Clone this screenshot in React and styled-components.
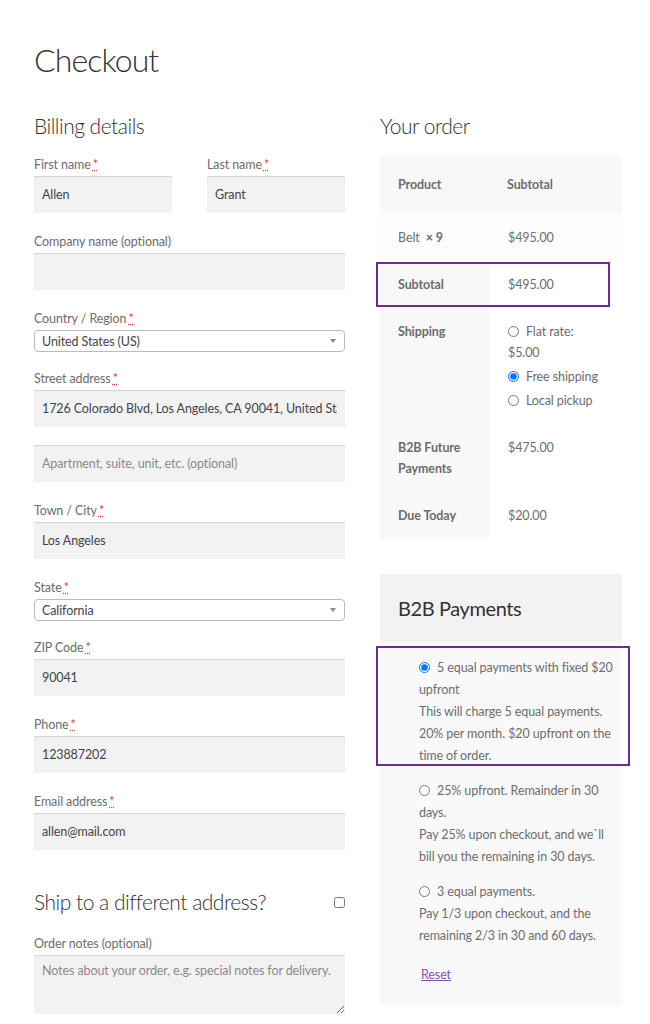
import React from "react";
import styled, { createGlobalStyle } from "styled-components";

const GlobalStyle = createGlobalStyle`
  body {
    margin: 0;
    background: #fff;
    color: #6d6d6d;
    font-family: Lato, "Liberation Sans", sans-serif;
    font-size: 12.5px;
    letter-spacing: -0.1px;
  }
  * {
    box-sizing: border-box;
  }
`;

const Page = styled.div`
  width: 650px;
  padding: 40px 28px 0 34px;
`;

const Title = styled.h1`
  margin: 0;
  font-size: 32px;
  line-height: 40px;
  font-weight: 300;
  letter-spacing: -0.9px;
  color: #333;
`;

const Columns = styled.div`
  display: grid;
  grid-template-columns: 311px 242px;
  column-gap: 35px;
  margin-top: 32px;
`;

const Heading = styled.h3`
  margin: 0 0 ${(p) => p.$gap || 14}px;
  font-size: 21px;
  line-height: 28px;
  font-weight: 300;
  letter-spacing: -0.5px;
  color: #333;
`;

const NameRow = styled.div`
  display: grid;
  grid-template-columns: 138px 138px;
  column-gap: 35px;
`;

const Field = styled.div`
  margin-bottom: ${(p) => (p.$compact ? 16 : 18)}px;
`;

const Label = styled.label`
  display: block;
  line-height: 21px;
  margin-bottom: 1px;
  color: #6d6d6d;
`;

const Required = styled.abbr`
  color: #e2401c;
  text-decoration: underline dotted;
  margin-left: 2px;
`;

const Input = styled.input`
  display: block;
  width: 100%;
  height: 37px;
  padding: 0 8px;
  border: 0;
  background: #f2f2f2;
  box-shadow: inset 0 1px 1px rgba(0, 0, 0, 0.125);
  font-family: inherit;
  font-size: 12.5px;
  letter-spacing: -0.1px;
  color: #43454b;
  outline: none;
  &::placeholder {
    color: #8a8a8a;
  }
`;

const Select = styled.div`
  display: flex;
  align-items: center;
  justify-content: space-between;
  height: 22px;
  padding: 0 8px 0 7px;
  border: 1px solid #bbb;
  border-radius: 4px;
  background: #fff;
  color: #43454b;
`;

const Caret = styled.span`
  width: 0;
  height: 0;
  border-left: 3.5px solid transparent;
  border-right: 3.5px solid transparent;
  border-top: 4px solid #888;
`;

const ShipRow = styled.div`
  display: flex;
  align-items: center;
  justify-content: space-between;
  margin: 38px 0 17px;
`;

const ShipTitle = styled.h3`
  margin: 0;
  font-size: 21px;
  line-height: 28px;
  font-weight: 300;
  letter-spacing: -0.5px;
  color: #333;
`;

const Check = styled.input`
  width: 11px;
  height: 11px;
  margin: 0;
`;

const Notes = styled.textarea`
  display: block;
  width: 100%;
  height: 59px;
  padding: 8px;
  border: 0;
  background: #f2f2f2;
  box-shadow: inset 0 1px 1px rgba(0, 0, 0, 0.125);
  font-family: inherit;
  font-size: 12.5px;
  letter-spacing: -0.1px;
  color: #43454b;
  resize: vertical;
  &::placeholder {
    color: #8a8a8a;
  }
`;

const Overlay = styled.div`
  position: relative;
`;

const Highlight = styled.div`
  position: absolute;
  top: ${(p) => p.$top}px;
  left: ${(p) => p.$left}px;
  width: ${(p) => p.$width}px;
  height: ${(p) => p.$height}px;
  border: 2px solid #6a2c91;
  pointer-events: none;
`;

const Table = styled.table`
  width: 100%;
  border-collapse: collapse;
  table-layout: fixed;
  line-height: 21px;
`;

const Th = styled.th`
  width: ${(p) => p.$w || "auto"};
  text-align: left;
  vertical-align: top;
  font-weight: 700;
  background: #f8f8f8;
  padding: ${(p) => p.$pt || 12}px 18px ${(p) => p.$pb || p.$pt || 12}px;
`;

const Td = styled.td`
  vertical-align: top;
  background: ${(p) => p.$bg || "#fff"};
  padding: ${(p) => p.$pt || 12}px 18px ${(p) => p.$pb || p.$pt || 12}px
    ${(p) => p.$pl || 19}px;
`;

const ShipList = styled.ul`
  list-style: none;
  margin: 0;
  padding: 0;
`;

const ShipItem = styled.li`
  margin-bottom: 3px;
  &:last-child {
    margin-bottom: 0;
  }
`;

const Radio = styled.input`
  width: 11px;
  height: 11px;
  margin: 0 7px 0 0;
  vertical-align: -1px;
`;

const PayBox = styled.div`
  position: relative;
  margin-top: 35px;
`;

const PayHead = styled.div`
  background: #f2f2f2;
  padding: 20px 18px 19px;
`;

const PayTitle = styled.h2`
  margin: 0;
  font-size: 20px;
  line-height: 28px;
  font-weight: 400;
  letter-spacing: -0.4px;
  color: #333;
`;

const PayBody = styled.div`
  background: #f9f9f9;
  padding: 16px 4px 19px 39px;
  line-height: 22px;
`;

const Option = styled.div`
  margin-bottom: 13px;
`;

const Desc = styled.div``;

const Reset = styled.a`
  display: inline-block;
  margin: 4px 0 0 2px;
  color: #7f54b3;
  text-decoration: underline;
`;

const Star = () => <Required title="required">*</Required>;

const Text = ({ label, value, placeholder, req }) => (
  <Field>
    <Label>
      {label}
      {req && <Star />}
    </Label>
    <Input defaultValue={value} placeholder={placeholder} readOnly />
  </Field>
);

const Dropdown = ({ label, value }) => (
  <Field $compact>
    <Label>
      {label}
      <Star />
    </Label>
    <Select>
      {value}
      <Caret />
    </Select>
  </Field>
);

const payments = [
  {
    title: "5 equal payments with fixed $20 upfront",
    desc: "This will charge 5 equal payments. 20% per month. $20 upfront on the time of order.",
    checked: true,
  },
  {
    title: "25% upfront. Remainder in 30 days.",
    desc: "Pay 25% upon checkout, and we`ll bill you the remaining in 30 days.",
  },
  {
    title: "3 equal payments.",
    desc: "Pay 1/3 upon checkout, and the remaining 2/3 in 30 and 60 days.",
  },
];

export default function App() {
  return (
    <Page>
      <GlobalStyle />
      <Title>Checkout</Title>
      <Columns>
        <div>
          <Heading>Billing details</Heading>
          <NameRow>
            <Text label="First name" value="Allen" req />
            <Text label="Last name" value="Grant" req />
          </NameRow>
          <Text label="Company name (optional)" value="" />
          <Dropdown label="Country / Region" value="United States (US)" />
          <Field>
            <Label>
              Street address
              <Star />
            </Label>
            <Input
              defaultValue="1726 Colorado Blvd, Los Angeles, CA 90041, United States"
              readOnly
            />
          </Field>
          <Field>
            <Input placeholder="Apartment, suite, unit, etc. (optional)" readOnly />
          </Field>
          <Text label="Town / City" value="Los Angeles" req />
          <Dropdown label="State" value="California" />
          <Text label="ZIP Code" value="90041" req />
          <Text label="Phone" value="123887202" req />
          <Text label="Email address" value="allen@mail.com" req />

          <ShipRow>
            <ShipTitle>Ship to a different address?</ShipTitle>
            <Check type="checkbox" />
          </ShipRow>
          <Label>Order notes (optional)</Label>
          <Notes placeholder="Notes about your order, e.g. special notes for delivery." />
        </div>

        <div>
          <Heading $gap={16}>Your order</Heading>
          <Overlay>
            <Table>
              <thead>
                <tr>
                  <Th $w="109px" $pt={18}>Product</Th>
                  <Th $pt={18}>Subtotal</Th>
                </tr>
              </thead>
              <tbody>
                <tr>
                  <Td $bg="#fdfdfd" $pt={14} $pl={18}>
                    Belt <strong>&nbsp;×&nbsp;9</strong>
                  </Td>
                  <Td $bg="#fdfdfd" $pt={14}>$495.00</Td>
                </tr>
              </tbody>
              <tfoot>
                <tr>
                  <Th>Subtotal</Th>
                  <Td>$495.00</Td>
                </tr>
                <tr>
                  <Th $pt={14}>Shipping</Th>
                  <Td $pt={14} $pb={18}>
                    <ShipList>
                      <ShipItem>
                        <Radio type="radio" name="ship" />
                        Flat rate: $5.00
                      </ShipItem>
                      <ShipItem>
                        <Radio type="radio" name="ship" defaultChecked />
                        Free shipping
                      </ShipItem>
                      <ShipItem>
                        <Radio type="radio" name="ship" />
                        Local pickup
                      </ShipItem>
                    </ShipList>
                  </Td>
                </tr>
                <tr>
                  <Th $pt={8} $pb={14}>B2B Future Payments</Th>
                  <Td $pt={8} $pb={14}>$475.00</Td>
                </tr>
                <tr>
                  <Th $pb={13}>Due Today</Th>
                  <Td $pb={13}>$20.00</Td>
                </tr>
              </tfoot>
            </Table>
            <Highlight $top={106} $left={-4} $width={234} $height={45} />
          </Overlay>

          <PayBox>
            <PayHead>
              <PayTitle>B2B Payments</PayTitle>
            </PayHead>
            <PayBody>
              {payments.map((p) => (
                <Option key={p.title}>
                  <Radio type="radio" name="pay" defaultChecked={p.checked} />
                  {p.title}
                  <Desc>{p.desc}</Desc>
                </Option>
              ))}
              <Reset href="#">Reset</Reset>
            </PayBody>
            <Highlight $top={72} $left={-4} $width={254} $height={120} />
          </PayBox>
        </div>
      </Columns>
    </Page>
  );
}
